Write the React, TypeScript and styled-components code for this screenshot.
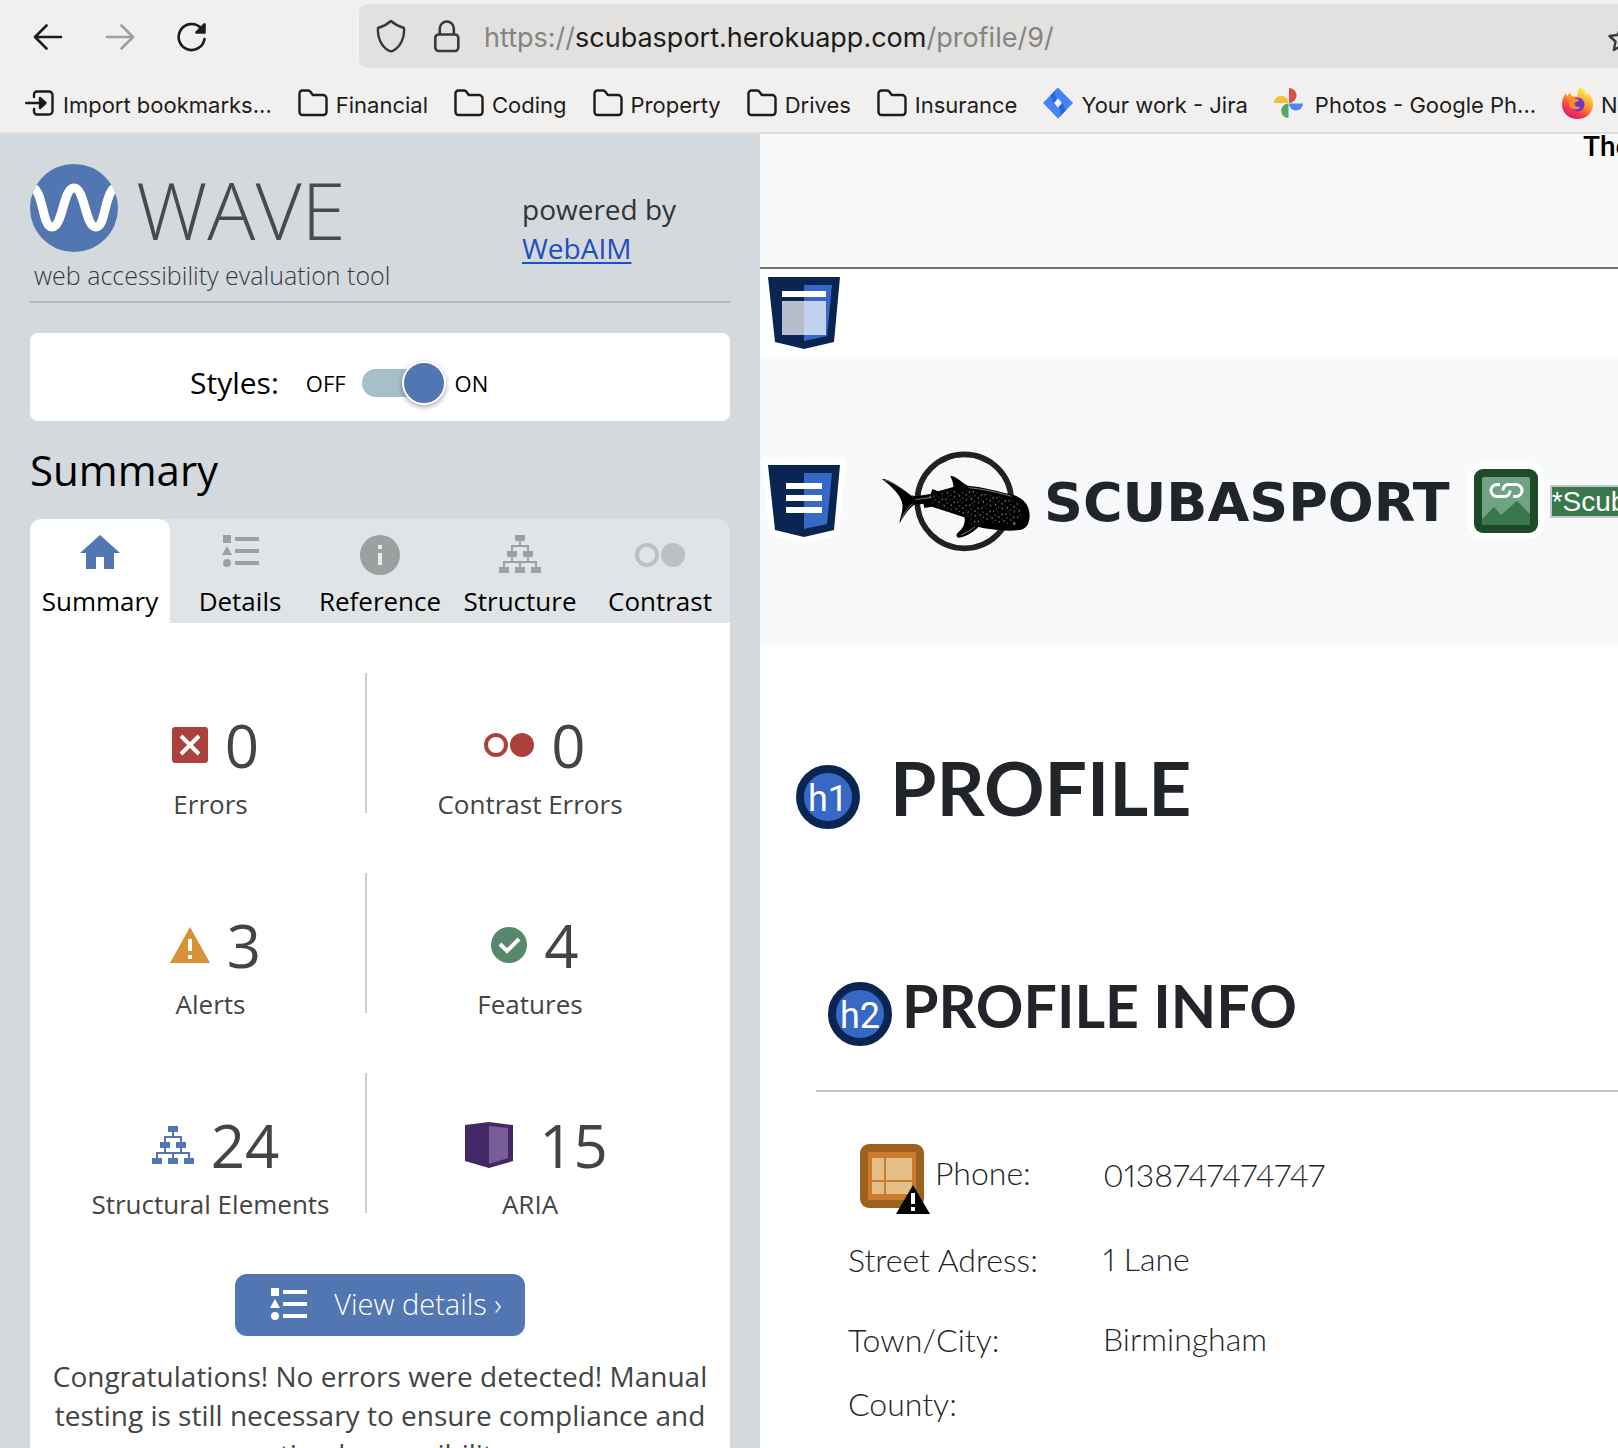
import React from "react";
import styled, { createGlobalStyle, css } from "styled-components";

const color = {
  chrome: "#f1f0ef",
  chromeField: "#e2e1df",
  ink: "#1d1c1b",
  faded: "#858483",
  sidebar: "#d4d9de",
  blue: "#5276b1",
  text: "#444444",
  heading: "#212529",
  navy: "#0b2553",
  royal: "#3668c5",
};

const GlobalStyle = createGlobalStyle`
  *, *::before, *::after { box-sizing: border-box; }
  body { margin: 0; background: #fff; }
  h1, h2, p, dl, dt, dd { margin: 0; }
  svg { display: block; flex: none; }
  button { border: 0; padding: 0; background: none; font: inherit; color: inherit; cursor: pointer; }
`;

const Window = styled.div`
  display: flex;
  flex-direction: column;
  height: 100vh;
  overflow: hidden;
`;

/* ---------- browser chrome ---------- */

const Chrome = styled.header`
  flex: none;
  background: ${color.chrome};
  border-bottom: 2px solid #e0dedd;
  color: ${color.ink};
  font-family: Inter, "Liberation Sans", sans-serif;
`;

const Toolbar = styled.div`
  display: flex;
  align-items: center;
  padding: 4px 0 4px 32px;
`;

const NavButtons = styled.div`
  display: flex;
  gap: 40px;
  width: 327px;
  flex: none;
  padding-top: 2px;
`;

const NavButton = styled.button`
  display: grid;
  place-items: center;
  width: 32px;
  height: 32px;
  &:disabled { color: #a09f9e; }
`;

const AddressBar = styled.div`
  display: flex;
  align-items: center;
  flex: 1;
  min-width: 0;
  height: 64px;
  padding-left: 16px;
  background: ${color.chromeField};
  border-radius: 8px 0 0 8px;
`;

const AddressIcons = styled.div`
  display: flex;
  gap: 24px;
  width: 109px;
  flex: none;
`;

const Url = styled.span`
  flex: 1;
  padding-top: 4px;
  font-size: 27px;
  line-height: 40px;
  white-space: nowrap;
  color: ${color.faded};
  b { font-weight: 400; color: ${color.ink}; }
`;

const StarSlot = styled.button`
  width: 10px;
  padding-top: 6px;
  overflow: hidden;
`;

const Bookmarks = styled.nav`
  display: flex;
  align-items: center;
  gap: 26px;
  height: 60px;
  padding-left: 25px;
  overflow: hidden;
`;

const Bookmark = styled.a<{ $gap?: number }>`
  display: flex;
  align-items: center;
  gap: ${(p) => p.$gap ?? 8}px;
  flex: none;
  color: inherit;
  text-decoration: none;
  font-size: 22px;
  line-height: 32px;
  padding-top: 6px;
  white-space: nowrap;
  svg { margin-bottom: 4px; }
`;

/* ---------- sidebar ---------- */

const Body = styled.div`
  display: grid;
  grid-template-columns: 760px minmax(0, 1fr);
  flex: 1;
  min-height: 0;
`;

const Sidebar = styled.aside`
  display: flex;
  flex-direction: column;
  min-height: 0;
  overflow: hidden;
  padding: 30px 30px 0;
  background: ${color.sidebar};
  font-family: "Open Sans", "Noto Sans", sans-serif;
`;

const Brand = styled.div`
  display: grid;
  grid-template-columns: 1fr 208px;
  flex: none;
  padding-bottom: 12px;
  border-bottom: 2px solid #b2b7bc;
`;

const BrandRow = styled.div`
  display: flex;
  align-items: center;
  gap: 18px;
`;

const BrandName = styled.span`
  padding-top: 2px;
  font-size: 80px;
  line-height: 86px;
  font-weight: 300;
  color: #4a4a4a;
`;

const Tagline = styled.p`
  margin-top: 9px;
  padding-left: 4px;
  font-size: 25px;
  line-height: 28px;
  font-weight: 300;
  color: #3a3a3a;
`;

const Powered = styled.p`
  padding-top: 26px;
  font-size: 28px;
  line-height: 39px;
  color: #333;
  a { display: block; width: max-content; color: #1d4fc4; text-decoration-thickness: 2px; text-underline-offset: 3px; }
`;

const StylesPanel = styled.div`
  display: flex;
  align-items: center;
  flex: none;
  height: 88px;
  margin-top: 30px;
  padding: 12px 0 0 160px;
  background: #fff;
  border-radius: 8px;
`;

const StylesLabel = styled.label`
  font-size: 30px;
  line-height: 40px;
  margin-right: 27px;
`;

const StateText = styled.span`
  font-size: 22px;
  line-height: 40px;
`;

const Toggle = styled.input`
  appearance: none;
  position: relative;
  width: 84px;
  height: 44px;
  margin: 0 9px 0 16px;
  cursor: pointer;
  &::before {
    content: "";
    position: absolute;
    inset: 8px 14px 8px 0;
    border-radius: 14px;
    background: #a6bfc9;
  }
  &::after {
    content: "";
    position: absolute;
    top: 0;
    left: 0;
    width: 44px;
    height: 44px;
    border: 2px solid #fff;
    border-radius: 50%;
    background: ${color.blue};
    box-shadow: 0 2px 5px rgba(0, 0, 0, 0.35);
  }
  &:checked::after { left: 40px; }
`;

const SectionTitle = styled.h1`
  flex: none;
  font-size: 42px;
  line-height: 98px;
  font-weight: 400;
`;

const Tabs = styled.div`
  display: grid;
  grid-template-columns: repeat(5, 1fr);
  flex: none;
  background: #e0e4e7;
  border-radius: 12px 12px 0 0;
`;

const Tab = styled.button<{ $active?: boolean }>`
  display: flex;
  flex-direction: column;
  align-items: center;
  gap: 8px;
  padding: 16px 0 4px;
  color: ${(p) => (p.$active ? color.blue : "#9ca0a0")};
  ${(p) => p.$active && css`background: #fff; border-radius: 12px 12px 0 0;`}
`;

const TabIcon = styled.span`
  display: flex;
  height: 40px;
`;

const TabLabel = styled.span`
  font-size: 26px;
  line-height: 36px;
  color: #000;
`;

const Panel = styled.section`
  flex: 1 0 auto;
  display: flex;
  flex-direction: column;
  align-items: center;
  padding-top: 50px;
  background: #fff;
  color: ${color.text};
`;

const Stats = styled.div`
  display: grid;
  grid-template-columns: 312px 2px 326px;
  grid-auto-rows: 200px;
  align-self: flex-start;
  margin: 0 0 1px 23px;
`;

const Divider = styled.span`
  height: 140px;
  background: #cbcccd;
`;

const Stat = styled.div`
  display: flex;
  flex-direction: column;
  align-items: center;
  padding-top: 30px;
  &:nth-child(3n + 1) { padding-left: 3px; }
`;

const StatTop = styled.div`
  display: flex;
  align-items: center;
  gap: 17px;
  padding-left: 10px;
`;

const StatCount = styled.span`
  font-size: 60px;
  line-height: 84px;
`;

const StatLabel = styled.span`
  font-size: 26px;
  line-height: 34px;
`;

const DetailsButton = styled.button`
  display: flex;
  align-items: center;
  gap: 27px;
  height: 62px;
  padding: 0 23px 2px 35px;
  border-radius: 12px;
  background: ${color.blue};
  color: #fff;
  font-size: 29px;
  line-height: 40px;
  font-weight: 300;
`;

const Message = styled.p`
  padding: 21px 20px 0;
  font-size: 28px;
  line-height: 39px;
  text-align: center;
`;

/* ---------- inspected page ---------- */

const Page = styled.main`
  min-width: 0;
  overflow: hidden;
  background: #fff;
  color: ${color.heading};
  font-family: Lato, "Open Sans", sans-serif;
`;

const Notice = styled.div`
  height: 135px;
  padding-left: 823px;
  background: #f9f9f9;
  border-bottom: 2px solid #6f776f;
  color: #000;
  font-family: Roboto, "Liberation Sans", sans-serif;
  font-size: 28px;
  font-weight: 500;
  line-height: 26px;
  white-space: nowrap;
`;

const HeaderLandmark = styled.div`
  height: 88px;
  padding: 8px;
`;

const SiteNav = styled.nav`
  display: flex;
  align-items: center;
  height: 288px;
  padding-left: 2px;
  background: #f8f9fb;
  white-space: nowrap;
`;

const SiteLogo = styled.a`
  display: flex;
  align-items: center;
  gap: 12px;
  margin: 0 18px 0 34px;
  color: inherit;
  text-decoration: none;
`;

const SiteName = styled.span`
  padding-top: 3px;
  font-family: "DejaVu Sans", Inter, sans-serif;
  font-size: 54px;
  line-height: 64px;
  font-weight: 700;
`;

const AltText = styled.span`
  margin-left: 6px;
  border: 2px solid #c5c8c8;
  background: #38784a;
  color: #fff;
  font-family: "Liberation Sans", Arial, sans-serif;
  font-size: 28px;
  line-height: 29px;
`;

const HeadingRow = styled.div<{ $level: 1 | 2 }>`
  display: flex;
  align-items: flex-end;
  gap: ${(p) => (p.$level === 1 ? 30 : 10)}px;
  margin-top: ${(p) => (p.$level === 1 ? 100 : 133)}px;
  padding-left: ${(p) => (p.$level === 1 ? 36 : 68)}px;
  h1, h2 {
    font-size: ${(p) => (p.$level === 1 ? 75 : 59)}px;
    line-height: ${(p) => (p.$level === 1 ? 84 : 80)}px;
    font-weight: 700;
    white-space: nowrap;
  }
  h2 { padding-top: 4px; }
`;

const HeadingMark = styled.span`
  display: grid;
  place-items: center;
  width: 64px;
  height: 64px;
  flex: none;
  padding-top: 4px;
  border: 8px solid ${color.navy};
  border-radius: 50%;
  background: ${color.royal};
  color: #fff;
  font-family: Roboto, sans-serif;
  font-size: 36px;
  line-height: 44px;
  font-weight: 400;
`;

const Rule = styled.hr`
  height: 2px;
  margin: 44px 0 40px 56px;
  border: 0;
  background: #c4c5c5;
`;

const Info = styled.dl`
  padding-left: 88px;
  font-size: 32px;
  line-height: 46px;
  font-weight: 300;
`;

const InfoRow = styled.div<{ $flagged?: boolean }>`
  display: grid;
  grid-template-columns: 255px 1fr;
  align-items: center;
  min-height: ${(p) => (p.$flagged ? 88 : 48)}px;
  dt { display: flex; align-items: flex-start; gap: 3px; padding-left: ${(p) => (p.$flagged ? 12 : 0)}px; }
  dd { padding: 16px 0 18px; font-variant-numeric: proportional-nums; }
`;

const FlagLabel = styled.span`
  padding-top: 6px;
`;

const FlagIcon = styled.svg`
  margin: 0 0 -8px;
`;

/* ---------- icons ---------- */

const FolderIcon = () => (
  <svg width="30" height="28" viewBox="0 0 30 28" fill="none" stroke="currentColor" strokeWidth="2.400" strokeLinejoin="round">
    <path d="M1.500 4.500a3 3 0 0 1 3-3h5.600c1 0 1.700.4 2.300 1.200L14.800 6H25a3.500 3.500 0 0 1 3.500 3.500V23a3 3 0 0 1-3 3h-21a3 3 0 0 1-3-3z" />
  </svg>
);

const ImportIcon = () => (
  <svg width="30" height="26" viewBox="0 0 30 26" fill="none" stroke="currentColor" strokeWidth="2.400" strokeLinecap="round" strokeLinejoin="round">
    <path d="M9 7V4.500a3 3 0 0 1 3-3h12a3.500 3.500 0 0 1 3.500 3.500v16a3.500 3.500 0 0 1-3.500 3.500H12a3 3 0 0 1-3-3V19M1.200 13H17" />
    <path d="M15 8l5.500 5-5.500 5z" fill="currentColor" />
  </svg>
);

const JiraIcon = () => (
  <svg width="30" height="32" viewBox="0 0 31 32">
    <path d="M15.500 0L31 16 15.500 32 0 16z" fill="#4384f7" />
    <path d="M15.500 0C11.500 4 11.500 8.500 15.500 12L11 16.500 7.500 8.200z" fill="#2f66d6" />
    <path d="M15.500 32c4-4 4-8.500 0-12l4.500-4.500 3.500 8.300z" fill="#2f66d6" />
    <path d="M15.500 11L19.500 16l-4 5-4-5z" fill="#f1f0ef" />
  </svg>
);

const PhotosIcon = () => (
  <svg width="29" height="30" viewBox="0 0 29 30">
    <path d="M15 0a7.500 7.500 0 0 1 0 15z" fill="#d95040" />
    <path d="M29 15.500a7 7 0 0 1-14 0z" fill="#4f86ec" />
    <path d="M14.500 30a7.250 7.250 0 0 1 0-14.500z" fill="#58a55c" />
    <path d="M0 15a7.250 7.250 0 0 1 14.500 0z" fill="#f2bf42" />
  </svg>
);

const FirefoxIcon = () => (
  <svg width="31" height="32" viewBox="0 0 31 32">
    <defs>
      <linearGradient id="flame" x1="0.800" y1="0.100" x2="0.300" y2="1">
        <stop offset="0" stopColor="#fff04f" />
        <stop offset="0.450" stopColor="#ff8f2b" />
        <stop offset="0.750" stopColor="#f5394b" />
        <stop offset="1" stopColor="#d61a7e" />
      </linearGradient>
    </defs>
    <path d="M18.500 0c4 2.500 5.500 5 6 7.500 1-.2 1.500-1 1.500-2 3.500 4 5 8 5 12C31 26 24 32 15.500 32S0 26 0 17.500C0 13 1.500 9 4 6c0 1.500.5 2.500 1 3.200C6 7.500 7 6.500 8.500 5.500c0 1.700.5 3 2 3.700 2 .3 3.500.3 5 .3C15 6 16 2.500 18.500 0z" fill="url(#flame)" />
    <circle cx="15.500" cy="17.500" r="7" fill="#6f35c9" />
    <path d="M4 10.500c3-1 7-.8 9 1 1.500.3 3 .5 4 1.500-1 2-4 2-4.500 3.500 0 3 3 4 6 3-2 4-9 4-11-1-1-3 0-4 .5-5-1.500-1-3-1.500-4-3z" fill="#ff8a2b" />
  </svg>
);

const StructureIcon = () => (
  <svg width="42" height="38" viewBox="0 0 42 38" fill="currentColor">
    <path d="M16 0h10v6H16zM8 16h10v6H8zM24 16h10v6H24zM0 32h10v6H0zM16 32h10v6H16zM32 32h10v6H32z" />
    <path d="M21 6v5M13 16v-5h16v5M13 22v5M29 22v5M5 32v-5h32v5M21 27v5" fill="none" stroke="currentColor" strokeWidth="2" />
  </svg>
);

const ListIcon = () => (
  <svg width="37" height="32" viewBox="0 0 37 32" fill="currentColor">
    <path d="M1 0h8v8H1zM13 2h24v4H13zM5 11l5 9H0zM13 14h24v4H13zM13 26h24v4H13z" />
    <circle cx="5" cy="28" r="4" />
  </svg>
);

const HomeIcon = () => (
  <svg width="40" height="34" viewBox="0 0 40 34" fill="currentColor">
    <path d="M20 0l20 18h-6v16H24V22h-8v12H6V18H0z" />
  </svg>
);

const InfoIcon = () => (
  <svg width="40" height="40" viewBox="0 0 40 40" fill="currentColor">
    <circle cx="20" cy="20" r="20" />
    <path d="M18 10h4v4h-4zM18 18h4v12h-4z" fill="#e8ebed" />
  </svg>
);

const ContrastIcon = ({ tint, height = 24 }: { tint: string; height?: number }) => (
  <svg width="50" height={height} viewBox={`0 ${12 - height / 2} 50 ${height}`}>
    <circle cx="12" cy="12" r="10" fill="none" stroke={tint} strokeWidth="4" />
    <circle cx="38" cy="12" r="12" fill={tint} />
  </svg>
);

const ErrorIcon = () => (
  <svg width="36" height="36" viewBox="0 0 36 36">
    <rect width="36" height="36" rx="3" fill="#ab403d" />
    <path d="M9 9l18 18M27 9L9 27" stroke="#fff" strokeWidth="4" />
  </svg>
);

const AlertIcon = () => (
  <svg width="40" height="36" viewBox="0 0 40 36">
    <path d="M20 0l20 36H0z" fill="#d69237" />
    <path d="M18 12h4v12h-4zM18 28h4v4h-4z" fill="#fff" />
  </svg>
);

const CheckIcon = () => (
  <svg width="36" height="36" viewBox="0 0 36 36">
    <circle cx="18" cy="18" r="18" fill="#56886a" />
    <path d="M9 17l7 7 12-12" fill="none" stroke="#fff" strokeWidth="4" />
  </svg>
);

const AriaIcon = () => (
  <svg width="60" height="46" viewBox="-3 0 60 46">
    <path d="M0 3l24-3 24 3v36l-24 7-24-7z" fill="#432766" />
    <path d="M24 4l19 2v30l-19 6z" fill="#785d98" />
  </svg>
);

const WaveLogo = () => (
  <svg width="88" height="88" viewBox="0 0 88 88">
    <clipPath id="disc"><circle cx="44" cy="44" r="44" /></clipPath>
    <g clipPath="url(#disc)">
      <rect width="88" height="88" fill={color.blue} />
      <path d="M-2 24C14 18 11 63 22 63S33 24 44 24s11 39 22 39S74 18 90 24" fill="none" stroke="#fff" strokeWidth="9" />
    </g>
  </svg>
);

const LandmarkIcon = ({ nav }: { nav?: boolean }) => (
  <svg width={nav ? 84 : 72} height={nav ? 84 : 72} viewBox={nav ? "-6 -6 84 84" : "0 0 72 72"}>
    {nav && <path d="M-6-6h84l-7 76-35 8-35-8z" fill="#fff" />}
    <path d="M0 0h72l-6 65-30 7-29-7z" fill={color.navy} />
    <path d="M36 8h28l-5 51-23 5z" fill={color.royal} />
    {nav ? (
      <path d="M18 18h36v6H18zM18 30h36v6H18zM18 42h36v6H18z" fill="#fff" />
    ) : (
      <>
        <path d="M14 14h44v6H14z" fill="#fff" />
        <path d="M14 24h44v34H14z" fill="#fff" fillOpacity="0.700" />
      </>
    )}
  </svg>
);

const sharkBody =
  "M425 689C445 688 485 716 512 738L526 742 572 735 577 720 594 727 640 714C641 700 634 690 631 680 652 682 665 702 684 710 730 714 780 728 820 738 852 748 869 770 869 800 868 830 855 843 830 844 800 847 750 842 715 834 705 845 680 864 655 866 645 862 650 852 660 845 672 835 677 815 673 805 640 795 600 780 575 773L553 777 550 764 522 767C500 785 490 805 479 822 477 812 490 790 487 765 485 740 455 712 425 689z";

const SharkLogo = () => (
  <svg width="152" height="104" viewBox="420 600 456 312">
    <defs>
      <pattern id="spots" width="37" height="41" patternUnits="userSpaceOnUse" patternTransform="rotate(14)">
        <g fill="#d0d0d0">
          <circle cx="4" cy="5" r="1.800" />
          <circle cx="17" cy="3" r="1.400" />
          <circle cx="30" cy="8" r="1.900" />
          <circle cx="11" cy="15" r="1.500" />
          <circle cx="23" cy="18" r="2" />
          <circle cx="34" cy="22" r="1.300" />
          <circle cx="4" cy="26" r="2" />
          <circle cx="15" cy="30" r="1.500" />
          <circle cx="27" cy="32" r="1.800" />
          <circle cx="9" cy="38" r="1.300" />
        </g>
      </pattern>
    </defs>
    <circle cx="673" cy="757" r="141" fill="none" stroke="#212121" strokeWidth="17" />
    <path d={sharkBody} fill="#000" />
    <path d="M560 742L640 722 690 724 800 745C835 755 845 775 845 805L820 825 740 822 690 826 685 800 580 765z" fill="url(#spots)" />
    <g fill="none" stroke="#bbb" strokeWidth="2">
      <path d="M435 693C465 702 495 725 518 742M484 812C490 795 500 780 518 765M527 752L575 745M686 716C730 720 780 732 815 742M662 858C675 854 695 842 706 832" />
      <circle cx="823" cy="824" r="3" />
    </g>
  </svg>
);

const LinkedImageIcon = () => (
  <svg width="76" height="76" viewBox="-6 -6 76 76">
    <rect x="-6" y="-6" width="76" height="76" rx="15" fill="#fff" />
    <rect width="64" height="64" rx="9" fill="#1e4a28" />
    <rect x="8" y="8" width="48" height="48" rx="2" fill="#6fa383" />
    <path d="M8 50l12-12 7 8 16-14 13 13v9a2 2 0 0 1-2 2H10a2 2 0 0 1-2-2z" fill="#38784a" />
    <path d="M26 15.500h-3a6 6 0 0 0 0 12h7.500c3.500 0 5.500-2.500 5.500-6M39 27.500h3a6 6 0 0 0 0-12h-7.500c-3.500 0-5.500 2.500-5.500 6" fill="none" stroke="#fff" strokeWidth="3" />
  </svg>
);

const LayoutTableIcon = () => (
  <FlagIcon width="72" height="72" viewBox="0 0 72 72">
    <rect width="64" height="64" rx="9" fill="#9c601f" />
    <rect x="8" y="8" width="48" height="48" rx="2" fill="#cb7b2b" />
    <path d="M12 14h12v22H12zM26 14h26v22H26zM12 38h12v12H12zM26 38h26v12H26z" fill="#e5bf87" />
    <path d="M53 41l17 29H36z" fill="#000" />
    <path d="M51 49h4v11h-4zM51 63h4v4h-4z" fill="#fff" />
  </FlagIcon>
);

/* ---------- data ---------- */

const folders = ["Financial", "Coding", "Property", "Drives", "Insurance"];

const tabs = [
  { label: "Summary", icon: <HomeIcon /> },
  { label: "Details", icon: <ListIcon /> },
  { label: "Reference", icon: <InfoIcon /> },
  { label: "Structure", icon: <StructureIcon /> },
  { label: "Contrast", icon: <ContrastIcon tint="#bcc0c2" height={40} /> },
];

const stats = [
  [
    { label: "Errors", count: 0, icon: <ErrorIcon /> },
    { label: "Contrast Errors", count: 0, icon: <ContrastIcon tint="#ab403d" /> },
  ],
  [
    { label: "Alerts", count: 3, icon: <AlertIcon /> },
    { label: "Features", count: 4, icon: <CheckIcon /> },
  ],
  [
    { label: "Structural Elements", count: 24, icon: <StructureIcon /> },
    { label: "ARIA", count: 15, icon: <AriaIcon /> },
  ],
];

const Tinted = styled.span`
  color: ${color.blue};
`;

const StatCell = ({ label, count, icon }: { label: string; count: number; icon: React.ReactNode }) => (
  <Stat>
    <StatTop>
      <Tinted>{icon}</Tinted>
      <StatCount>{count}</StatCount>
    </StatTop>
    <StatLabel>{label}</StatLabel>
  </Stat>
);

export default function App() {
  return (
    <Window>
      <GlobalStyle />
      <Chrome>
        <Toolbar>
          <NavButtons>
            <NavButton aria-label="Back">
              <svg width="30" height="26" viewBox="0 0 30 26" fill="none" stroke="currentColor" strokeWidth="2.600" strokeLinecap="round" strokeLinejoin="round">
                <path d="M28 13H2M13.500 1.500L2 13l11.500 11.500" />
              </svg>
            </NavButton>
            <NavButton aria-label="Forward" disabled>
              <svg width="30" height="26" viewBox="0 0 30 26" fill="none" stroke="currentColor" strokeWidth="2.600" strokeLinecap="round" strokeLinejoin="round">
                <path d="M2 13h26M16.500 1.500L28 13 16.500 24.500" />
              </svg>
            </NavButton>
            <NavButton aria-label="Reload">
              <svg width="30" height="30" viewBox="0 0 30 30" fill="none" stroke="currentColor" strokeWidth="2.600" strokeLinecap="round">
                <path d="M27.500 17A13 13 0 1 1 23.500 5.500" />
                <path d="M27.500 2.500v8h-8z" fill="currentColor" strokeLinejoin="round" />
              </svg>
            </NavButton>
          </NavButtons>
          <AddressBar>
            <AddressIcons>
              <svg width="32" height="34" viewBox="0 0 32 34" fill="none" stroke="#3a3938" strokeWidth="2.400" strokeLinejoin="round">
                <path d="M16 2c4 3.500 8.500 5.800 13 7 .8 9-3 18-10.500 22.500-1.500 1-3.500 1-5 0C6 27 2.200 18 3 9c4.500-1.200 9-3.500 13-7z" />
              </svg>
              <svg width="32" height="34" viewBox="0 0 32 34" fill="none" stroke="#3a3938" strokeWidth="2.600">
                <rect x="4.300" y="15.500" width="23" height="16.500" rx="3.500" />
                <path d="M8.800 15.500V9.500a7 7 0 0 1 14 0v6" />
              </svg>
            </AddressIcons>
            <Url>https://<b>scubasport.herokuapp.com</b>/profile/9/</Url>
            <StarSlot aria-label="Bookmark this page">
              <svg width="26" height="26" viewBox="0 0 26 26" fill="none" stroke="#3a3938" strokeWidth="2.400" strokeLinejoin="round">
                <path d="M13 1.500l3.500 7.500 8 1-6 5.500 1.600 8.500-7.100-4-7.100 4 1.600-8.500-6-5.500 8-1z" />
              </svg>
            </StarSlot>
          </AddressBar>
        </Toolbar>
        <Bookmarks aria-label="Bookmarks">
          <Bookmark href="#import"><ImportIcon />Import bookmarks...</Bookmark>
          {folders.map((name) => (
            <Bookmark key={name} href={`#${name.toLowerCase()}`}><FolderIcon />{name}</Bookmark>
          ))}
          <Bookmark href="#jira"><JiraIcon />Your work - Jira</Bookmark>
          <Bookmark href="#photos" $gap={12}><PhotosIcon />Photos - Google Ph...</Bookmark>
          <Bookmark href="#news"><FirefoxIcon />News</Bookmark>
        </Bookmarks>
      </Chrome>

      <Body>
        <Sidebar>
          <Brand>
            <div>
              <BrandRow><WaveLogo /><BrandName>WAVE</BrandName></BrandRow>
              <Tagline>web accessibility evaluation tool</Tagline>
            </div>
            <Powered>powered by <a href="#webaim">WebAIM</a></Powered>
          </Brand>

          <StylesPanel>
            <StylesLabel htmlFor="styles-toggle">Styles:</StylesLabel>
            <StateText>OFF</StateText>
            <Toggle id="styles-toggle" type="checkbox" defaultChecked />
            <StateText>ON</StateText>
          </StylesPanel>

          <SectionTitle>Summary</SectionTitle>

          <Tabs role="tablist">
            {tabs.map((tab, i) => (
              <Tab key={tab.label} role="tab" aria-selected={i === 0} $active={i === 0}>
                <TabIcon>{tab.icon}</TabIcon>
                <TabLabel>{tab.label}</TabLabel>
              </Tab>
            ))}
          </Tabs>

          <Panel>
            <Stats>
              {stats.map(([left, right]) => (
                <React.Fragment key={left.label}>
                  <StatCell {...left} />
                  <Divider />
                  <StatCell {...right} />
                </React.Fragment>
              ))}
            </Stats>
            <DetailsButton><ListIcon />View details ›</DetailsButton>
            <Message>
              Congratulations! No errors were detected! Manual testing is still necessary to ensure
              compliance and optimal accessibility.
            </Message>
          </Panel>
        </Sidebar>

        <Page>
          <Notice>The</Notice>
          <HeaderLandmark><LandmarkIcon /></HeaderLandmark>
          <SiteNav>
            <LandmarkIcon nav />
            <SiteLogo href="#home"><SharkLogo /><SiteName>SCUBASPORT</SiteName></SiteLogo>
            <LinkedImageIcon />
            <AltText>*Scubasport</AltText>
          </SiteNav>
          <HeadingRow $level={1}><HeadingMark>h1</HeadingMark><h1>PROFILE</h1></HeadingRow>
          <HeadingRow $level={2}><HeadingMark>h2</HeadingMark><h2>PROFILE INFO</h2></HeadingRow>
          <Rule />
          <Info>
            <InfoRow $flagged><dt><LayoutTableIcon /><FlagLabel>Phone:</FlagLabel></dt><dd>0138747474747</dd></InfoRow>
            <InfoRow><dt>Street Adress:</dt><dd>1 Lane</dd></InfoRow>
            <InfoRow><dt>Town/City:</dt><dd>Birmingham</dd></InfoRow>
            <InfoRow><dt>County:</dt></InfoRow>
          </Info>
        </Page>
      </Body>
    </Window>
  );
}
